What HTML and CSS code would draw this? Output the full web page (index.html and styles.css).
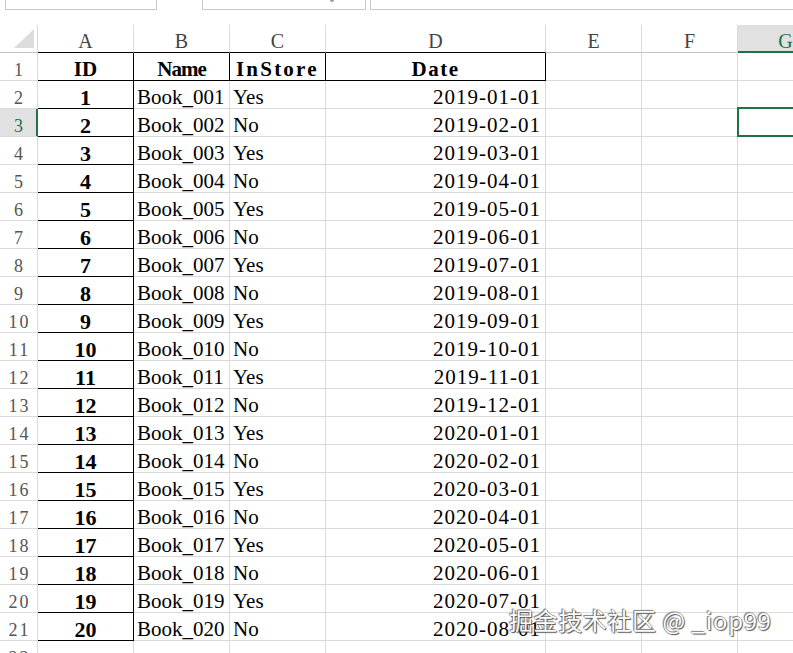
FILE: index.html
```html
<!DOCTYPE html>
<html>
<head>
<meta charset="utf-8">
<link rel="stylesheet" href="styles.css">
</head>
<body>
<div class="fbar">
  <div class="box box-name"></div>
  <div class="box box-mid"><span class="caret"></span></div>
  <div class="box box-formula"></div>
</div>
<div class="sheet">
  <div class="c ch corner"><svg class="tri" width="38" height="27" viewBox="0 0 38 27"><polygon points="34,4 34,23 14,23" fill="#dcdcdc"/></svg></div>
  <div class="c ch dk">A</div>
  <div class="c ch dk">B</div>
  <div class="c ch dk">C</div>
  <div class="c ch dk">D</div>
  <div class="c ch">E</div>
  <div class="c ch">F</div>
  <div class="c ch sel-col">G</div>

  <div class="c rh">1</div>
  <div class="c hd">ID</div>
  <div class="c hd hd-name">Name</div>
  <div class="c hd hd-wide">InStore</div>
  <div class="c hd hd-date">Date</div>
  <div class="c"></div><div class="c"></div><div class="c"></div>

  <div class="c rh">2</div><div class="c id">1</div><div class="c txt">Book_001</div><div class="c txt">Yes</div><div class="c date">2019-01-01</div><div class="c"></div><div class="c"></div><div class="c"></div>
  <div class="c rh sel-row">3</div><div class="c id">2</div><div class="c txt">Book_002</div><div class="c txt">No</div><div class="c date">2019-02-01</div><div class="c"></div><div class="c"></div><div class="c active"></div>
  <div class="c rh">4</div><div class="c id">3</div><div class="c txt">Book_003</div><div class="c txt">Yes</div><div class="c date">2019-03-01</div><div class="c"></div><div class="c"></div><div class="c"></div>
  <div class="c rh">5</div><div class="c id">4</div><div class="c txt">Book_004</div><div class="c txt">No</div><div class="c date">2019-04-01</div><div class="c"></div><div class="c"></div><div class="c"></div>
  <div class="c rh">6</div><div class="c id">5</div><div class="c txt">Book_005</div><div class="c txt">Yes</div><div class="c date">2019-05-01</div><div class="c"></div><div class="c"></div><div class="c"></div>
  <div class="c rh">7</div><div class="c id">6</div><div class="c txt">Book_006</div><div class="c txt">No</div><div class="c date">2019-06-01</div><div class="c"></div><div class="c"></div><div class="c"></div>
  <div class="c rh">8</div><div class="c id">7</div><div class="c txt">Book_007</div><div class="c txt">Yes</div><div class="c date">2019-07-01</div><div class="c"></div><div class="c"></div><div class="c"></div>
  <div class="c rh">9</div><div class="c id">8</div><div class="c txt">Book_008</div><div class="c txt">No</div><div class="c date">2019-08-01</div><div class="c"></div><div class="c"></div><div class="c"></div>
  <div class="c rh">10</div><div class="c id">9</div><div class="c txt">Book_009</div><div class="c txt">Yes</div><div class="c date">2019-09-01</div><div class="c"></div><div class="c"></div><div class="c"></div>
  <div class="c rh">11</div><div class="c id">10</div><div class="c txt">Book_010</div><div class="c txt">No</div><div class="c date">2019-10-01</div><div class="c"></div><div class="c"></div><div class="c"></div>
  <div class="c rh">12</div><div class="c id">11</div><div class="c txt">Book_011</div><div class="c txt">Yes</div><div class="c date">2019-11-01</div><div class="c"></div><div class="c"></div><div class="c"></div>
  <div class="c rh">13</div><div class="c id">12</div><div class="c txt">Book_012</div><div class="c txt">No</div><div class="c date">2019-12-01</div><div class="c"></div><div class="c"></div><div class="c"></div>
  <div class="c rh">14</div><div class="c id">13</div><div class="c txt">Book_013</div><div class="c txt">Yes</div><div class="c date">2020-01-01</div><div class="c"></div><div class="c"></div><div class="c"></div>
  <div class="c rh">15</div><div class="c id">14</div><div class="c txt">Book_014</div><div class="c txt">No</div><div class="c date">2020-02-01</div><div class="c"></div><div class="c"></div><div class="c"></div>
  <div class="c rh">16</div><div class="c id">15</div><div class="c txt">Book_015</div><div class="c txt">Yes</div><div class="c date">2020-03-01</div><div class="c"></div><div class="c"></div><div class="c"></div>
  <div class="c rh">17</div><div class="c id">16</div><div class="c txt">Book_016</div><div class="c txt">No</div><div class="c date">2020-04-01</div><div class="c"></div><div class="c"></div><div class="c"></div>
  <div class="c rh">18</div><div class="c id">17</div><div class="c txt">Book_017</div><div class="c txt">Yes</div><div class="c date">2020-05-01</div><div class="c"></div><div class="c"></div><div class="c"></div>
  <div class="c rh">19</div><div class="c id">18</div><div class="c txt">Book_018</div><div class="c txt">No</div><div class="c date">2020-06-01</div><div class="c"></div><div class="c"></div><div class="c"></div>
  <div class="c rh">20</div><div class="c id">19</div><div class="c txt">Book_019</div><div class="c txt">Yes</div><div class="c date">2020-07-01</div><div class="c"></div><div class="c"></div><div class="c"></div>
  <div class="c rh">21</div><div class="c id">20</div><div class="c txt">Book_020</div><div class="c txt">No</div><div class="c date">2020-08-01</div><div class="c"></div><div class="c"></div><div class="c"></div>
  <div class="c rh">22</div><div class="c"></div><div class="c"></div><div class="c"></div><div class="c"></div><div class="c"></div><div class="c"></div><div class="c"></div>
</div>
<div class="watermark">掘金技术社区 @ _iop99</div>
</body>
</html>
```
FILE: styles.css
```css
html, body {
  margin: 0;
  padding: 0;
  background: #fff;
  width: 793px;
  height: 653px;
  overflow: hidden;
  position: relative;
}

.fbar {
  display: flex;
  height: 25px;
  align-items: flex-start;
}

.box {
  box-sizing: border-box;
  flex-shrink: 0;
  height: 10px;
  border: 1px solid #c8c8c8;
  border-top: none;
  background: #fff;
  position: relative;
}

.box-name {
  margin-left: 5px;
  width: 152px;
}

.box-mid {
  margin-left: 45px;
  width: 164px;
}

.caret {
  position: absolute;
  left: 127px;
  top: 0;
  width: 4px;
  height: 2px;
  background: #9a9a9a;
  border-radius: 0 0 2px 2px;
}

.box-formula {
  margin-left: 4px;
  width: 460px;
}

.sheet {
  display: grid;
  grid-template-columns: 38px 96px 96px 96px 220px 96px 96px 96px;
  grid-auto-rows: 28px;
  font-family: "Liberation Serif", "Times New Roman", serif;
  color: #000;
}

.c {
  box-sizing: border-box;
  border-right: 1px solid #dadada;
  border-bottom: 1px solid #dadada;
  font-size: 21px;
  line-height: 25px;
  padding-top: 3px;
  white-space: nowrap;
  overflow: hidden;
}

.ch {
  font-size: 20px;
  color: #444;
  text-align: center;
  padding-top: 4px;
  border-bottom-color: #c4c4c4;
}

.ch.dk {
  border-bottom-color: #000;
}

.corner {
  position: relative;
  padding: 0;
}

.tri {
  display: block;
}

.sel-col {
  background: #e1e1e1;
  color: #217346;
  border-bottom: 1px solid #217346;
  box-shadow: inset 0 -1px 0 #217346;
}

.rh {
  font-size: 18px;
  color: #555;
  text-align: center;
  letter-spacing: 2px;
  padding-left: 2px;
  padding-top: 5px;
}

.sel-row {
  background: #e1e1e1;
  color: #217346;
  border-right: 1px solid #217346;
  box-shadow: inset -1px 0 0 #217346;
}

.hd {
  font-weight: bold;
  text-align: center;
  padding-top: 4px;
  border-right-color: #000;
  border-bottom-color: #000;
}

.hd-name {
  letter-spacing: -1px;
}

.hd-wide {
  letter-spacing: 2.2px;
  text-align: left;
  padding-left: 6px;
}

.hd-date {
  letter-spacing: 1.5px;
}

.id {
  font-weight: bold;
  font-size: 22px;
  text-align: center;
  padding-top: 4px;
  border-right-color: #000;
  border-bottom-color: #000;
}

.txt {
  padding-left: 3px;
  padding-top: 4px;
}

.date {
  text-align: right;
  padding-right: 4px;
  padding-top: 4px;
  letter-spacing: 1px;
}

.active {
  position: relative;
  overflow: visible;
}

.active::after {
  content: "";
  position: absolute;
  top: -2px;
  left: -1px;
  right: -2px;
  bottom: -1px;
  border: 2px solid #217346;
}

.watermark {
  position: absolute;
  left: 509px;
  top: 604px;
  font-family: "Noto Sans CJK SC", "Noto Sans", sans-serif;
  font-size: 24px;
  line-height: 32px;
  letter-spacing: 0.6px;
  color: #fff;
  white-space: nowrap;
  text-shadow: 0 0 1px #444, 1px 1px 1px #555, -1px -1px 1px #888;
}
```
